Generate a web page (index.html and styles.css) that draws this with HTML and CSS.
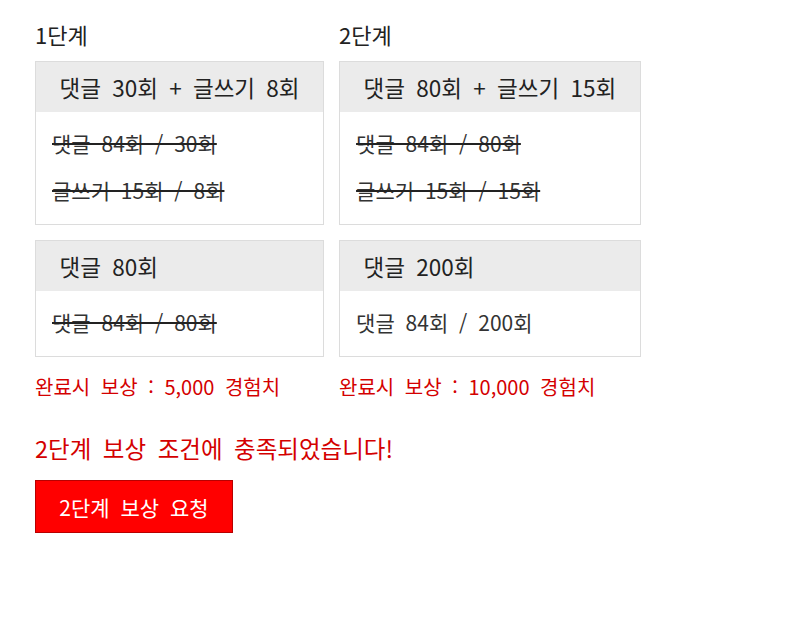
FILE: index.html
```html
<!DOCTYPE html>
<html lang="ko">
<head>
    <meta charset="UTF-8">
    <meta name="viewport" content="width=device-width, initial-scale=1.0">
    <title>단계 보상</title>
    <link rel="stylesheet" href="styles.css">
</head>
<body>
    <div class="wrap">
        <div class="stages">
            <div class="stage">
                <h2 class="stage-title">1단계</h2>
                <div class="mission">
                    <div class="mission-head">댓글 30회 + 글쓰기 8회</div>
                    <div class="mission-body">
                        <p class="done">댓글 84회 / 30회</p>
                        <p class="done">글쓰기 15회 / 8회</p>
                    </div>
                </div>
                <div class="mission">
                    <div class="mission-head">댓글 80회</div>
                    <div class="mission-body">
                        <p class="done">댓글 84회 / 80회</p>
                    </div>
                </div>
                <p class="reward">완료시 보상 : 5,000 경험치</p>
            </div>

            <div class="stage">
                <h2 class="stage-title">2단계</h2>
                <div class="mission">
                    <div class="mission-head">댓글 80회 + 글쓰기 15회</div>
                    <div class="mission-body">
                        <p class="done">댓글 84회 / 80회</p>
                        <p class="done">글쓰기 15회 / 15회</p>
                    </div>
                </div>
                <div class="mission">
                    <div class="mission-head">댓글 200회</div>
                    <div class="mission-body">
                        <p>댓글 84회 / 200회</p>
                    </div>
                </div>
                <p class="reward">완료시 보상 : 10,000 경험치</p>
            </div>
        </div>

        <p class="notice">2단계 보상 조건에 충족되었습니다!</p>
        <button class="btn" id="rewardBtn">2단계 보상 요청</button>
    </div>
</body>
</html>
```

FILE: styles.css
```css
body {
    margin: 0;
    font-family: 'Noto Sans CJK KR', 'Noto Sans', sans-serif;
    color: #333;
    word-spacing: 5px;
    background-color: #fff;
}

.wrap {
    padding: 22px 35px;
}

.stages {
    display: flex;
    align-items: flex-start;
    gap: 15px;
}

.stage {
    display: flex;
    flex-direction: column;
}

.stage-title {
    margin: 0 0 15px;
    font-size: 22px;
    font-weight: normal;
    line-height: 24px;
    color: #222;
}

.mission {
    border: 1px solid #dcdcdc;
    margin-bottom: 15px;
}

.mission-head {
    background-color: #ebebeb;
    padding: 0 23.5px;
    font-size: 22.5px;
    line-height: 50px;
    color: #222;
    white-space: nowrap;
}

.mission-body {
    padding: 8px 16px 10px;
}

.mission-body p {
    margin: 0;
    font-size: 21px;
    line-height: 47px;
    white-space: nowrap;
}

.mission-body p.done {
    text-decoration: line-through;
    text-decoration-thickness: 2px;
    text-decoration-color: #222;
}

.reward {
    margin: 0;
    font-size: 20px;
    line-height: 30px;
    color: #d40000;
    white-space: nowrap;
}

.notice {
    margin: 31px 0 17px;
    font-size: 23.5px;
    line-height: 30px;
    color: #d40000;
}

.btn {
    width: 198px;
    height: 53px;
    background-color: #ff0000;
    color: #fff;
    border: 1px solid #b80000;
    font-family: inherit;
    font-size: 21px;
    word-spacing: 5px;
    cursor: pointer;
}
```
